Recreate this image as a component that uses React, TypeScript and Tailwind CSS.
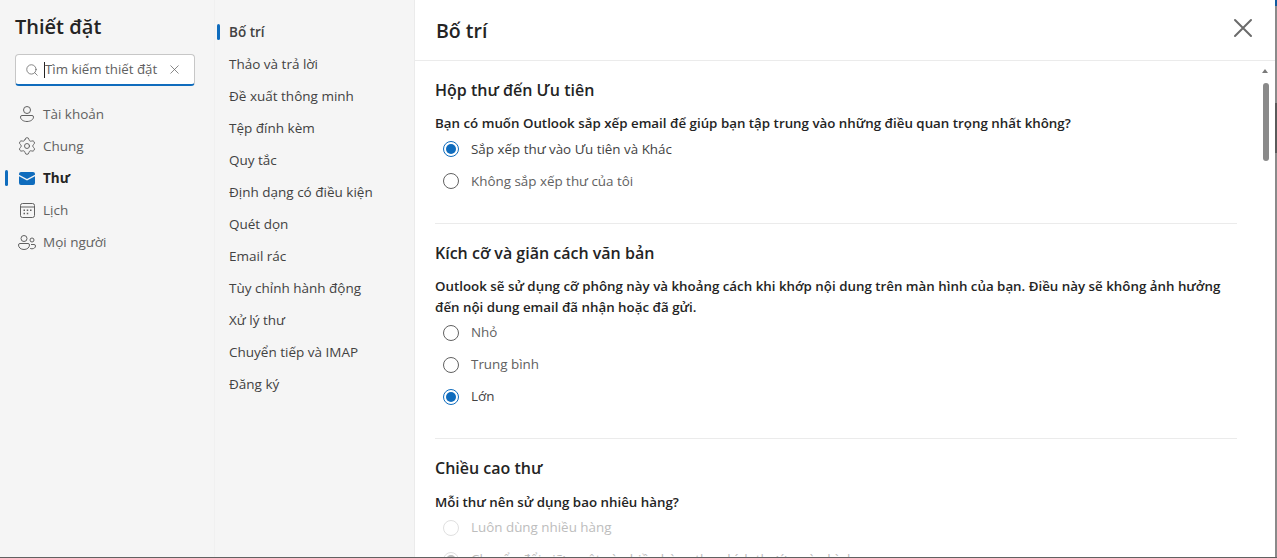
import { Search, X, Settings } from "lucide-react";

const subNav = [
  "Bố trí",
  "Thảo và trả lời",
  "Đề xuất thông minh",
  "Tệp đính kèm",
  "Quy tắc",
  "Định dạng có điều kiện",
  "Quét dọn",
  "Email rác",
  "Tùy chỉnh hành động",
  "Xử lý thư",
  "Chuyển tiếp và IMAP",
  "Đăng ký",
];

function MailIcon() {
  return (
    <svg width="16" height="13" viewBox="0 0 16 13">
      <path d="M0 2.800 8 7l8-4.200V2a2 2 0 0 0-2-2H2a2 2 0 0 0-2 2z" fill="#0f6cbd" />
      <path d="M0 4.200V11a2 2 0 0 0 2 2h12a2 2 0 0 0 2-2V4.200L8 8.400z" fill="#0f6cbd" />
    </svg>
  );
}

function PersonIcon() {
  return (
    <svg width="16" height="16" viewBox="0 0 16 16" fill="none" stroke="currentColor" strokeWidth="1">
      <circle cx="8" cy="4" r="3.500" />
      <path d="M3 9.500h10a1.500 1.500 0 0 1 1.500 1.500c0 2.500-2.800 4.500-6.500 4.500s-6.500-2-6.500-4.500A1.500 1.500 0 0 1 3 9.500z" />
    </svg>
  );
}

function CalendarIcon() {
  return (
    <svg width="15" height="15" viewBox="0 0 15 15" fill="none" stroke="currentColor" strokeWidth="1">
      <rect x="0.500" y="0.500" width="14" height="14" rx="2" />
      <path d="M1 4h13" />
      <g fill="currentColor" stroke="none">
        <rect x="3.500" y="6.500" width="1.500" height="1.500" />
        <rect x="6.750" y="6.500" width="1.500" height="1.500" />
        <rect x="10" y="6.500" width="1.500" height="1.500" />
        <rect x="3.500" y="9.750" width="1.500" height="1.500" />
        <rect x="6.750" y="9.750" width="1.500" height="1.500" />
      </g>
    </svg>
  );
}

function PeopleIcon() {
  return (
    <svg width="18" height="15" viewBox="0 0 18 15" fill="none" stroke="currentColor" strokeWidth="1">
      <circle cx="6" cy="3.500" r="3" />
      <circle cx="14" cy="5" r="2" />
      <path d="M2 8.500h8a1.500 1.500 0 0 1 1.500 1.500c0 2.500-2.300 4.500-5.500 4.500S0.500 12.500 0.500 10A1.500 1.500 0 0 1 2 8.500z" />
      <path d="M13 9.500h3a1.500 1.500 0 0 1 1.500 1.500c0 1.600-1.500 2.800-3.500 2.800-.7 0-1.300-.1-1.800-.4" />
    </svg>
  );
}

function Radio({ label, checked, disabled }: { label: string; checked?: boolean; disabled?: boolean }) {
  const ring = disabled ? "border-[#e0e0e0]" : checked ? "border-[#0f6cbd]" : "border-[#616161]";
  const text = disabled ? "text-[#bdbdbd]" : checked ? "text-[#424242]" : "text-[#616161]";
  return (
    <div className="flex h-8 items-center pl-2">
      <span className={`flex h-4 w-4 items-center justify-center rounded-full border ${ring}`}>
        {checked && <span className={`h-2.5 w-2.5 rounded-full ${disabled ? "bg-[#bdbdbd]" : "bg-[#0f6cbd]"}`} />}
      </span>
      <span className={`ml-3 text-[13.400px] ${text}`}>{label}</span>
    </div>
  );
}

function Section({ title, question, children, tight, last }: { title: string; question: string; children: React.ReactNode; tight?: boolean; last?: boolean }) {
  const spacing = last ? "pt-[17px]" : tight ? "border-b border-[#ebebeb] pb-[25px] pt-[17px]" : "border-b border-[#ebebeb] pb-[26px] pt-[17px]";
  return (
    <section className={spacing}>
      <h2 className="text-[16px] font-semibold leading-6 text-[#242424]">{title}</h2>
      <p className={`${last ? "mt-[12px]" : "mt-[11px]"} mb-[-0.500px] text-[13.330px] font-semibold leading-[20.500px] text-[#242424]`}>{question}</p>
      {children}
    </section>
  );
}

export default function App() {
  return (
    <div className="relative flex h-[558px] w-[1277px] overflow-hidden bg-white font-['Open_Sans','Noto_Sans',sans-serif] border-b border-[#616161]">
      <aside className="w-[215px] shrink-0 border-r border-[#f0f0f0] bg-[#f5f5f5] pl-[15px] pr-[19px]">
        <h1 className="mt-[13px] text-[20px] font-semibold leading-7 text-[#242424]">Thiết đặt</h1>
        <div className="mt-[13px] flex h-[32px] items-center rounded border border-[#c7c7c7] border-b-2 border-b-[#0f6cbd] bg-white pl-[9px] pr-[12px]">
          <Search size={14} strokeWidth={1.300} className="text-[#616161]" />
          <span className="ml-[5px] h-4 w-px bg-[#242424]" />
          <span className="flex-1 text-[13.300px] leading-none text-[#616161]">Tìm kiếm thiết đặt</span>
          <X size={15} strokeWidth={1.200} className="text-[#616161]" />
        </div>
        <nav className="mt-[12px] -ml-[10px]">
          <NavRow icon={<PersonIcon />} label="Tài khoản" />
          <NavRow icon={<Settings size={20} strokeWidth={1.150} />} label="Chung" />
          <NavRow icon={<MailIcon />} label="Thư" active />
          <NavRow icon={<CalendarIcon />} label="Lịch" />
          <NavRow icon={<PeopleIcon />} label="Mọi người" />
        </nav>
      </aside>

      <aside className="w-[200px] shrink-0 border-r border-[#ebebeb] bg-[#f5f5f5] pt-[16px]">
        {subNav.map((item, i) => (
          <div key={item} className="flex h-8 items-center">
            <span className={`h-4 w-[3px] rounded-sm ${i === 0 ? "ml-[2px] bg-[#0f6cbd]" : "ml-[2px]"}`} />
            <span className={`ml-[9px] text-[13.500px] text-[#424242] ${i === 0 ? "font-semibold" : ""}`}>{item}</span>
          </div>
        ))}
      </aside>

      <main className="relative flex-1 overflow-hidden">
        <header className="flex h-[61px] items-center justify-between border-b border-[#ebebeb] pl-[21px] pr-[22px]">
          <h1 className="mt-[2px] text-[19.500px] font-semibold text-[#242424]">Bố trí</h1>
          <svg width="20" height="20" viewBox="0 0 20 20" className="mt-[-4px] text-[#6b6b6b]" stroke="currentColor" strokeWidth="2" strokeLinecap="round">
            <path d="M2 2l16 16M18 2L2 18" />
          </svg>
        </header>
        <div className="pl-[20px] pr-[38px]">
          <Section title="Hộp thư đến Ưu tiên" question="Bạn có muốn Outlook sắp xếp email để giúp bạn tập trung vào những điều quan trọng nhất không?">
            <Radio label="Sắp xếp thư vào Ưu tiên và Khác" checked />
            <Radio label="Không sắp xếp thư của tôi" />
          </Section>
          <Section tight title="Kích cỡ và giãn cách văn bản" question="Outlook sẽ sử dụng cỡ phông này và khoảng cách khi khớp nội dung trên màn hình của bạn. Điều này sẽ không ảnh hưởng đến nội dung email đã nhận hoặc đã gửi.">
            <Radio label="Nhỏ" />
            <Radio label="Trung bình" />
            <Radio label="Lớn" checked />
          </Section>
          <Section last title="Chiều cao thư" question="Mỗi thư nên sử dụng bao nhiêu hàng?">
            <Radio label="Luôn dùng nhiều hàng" disabled />
            <Radio label="Chuyển đổi giữa một và nhiều hàng theo kích thước màn hình" checked disabled />
          </Section>
        </div>
        <div className="absolute right-[6px] top-[83px] h-[78px] w-[6px] rounded-full bg-[#8a8a8a]" />
        <div className="absolute right-[7px] top-[69px] h-0 w-0 border-x-[3px] border-b-[4px] border-x-transparent border-b-[#7a7a7a]" />
      </main>
      <div className="flex w-[2px] shrink-0 flex-col bg-[#8a8a8a]">
        <div className="h-[6px] bg-[#0f5a9e]" />
        <div className="mt-[97px] h-[50px] bg-[#5a5a5a]" />
      </div>
    </div>
  );
}

function NavRow({ icon, label, active }: { icon: React.ReactNode; label: string; active?: boolean }) {
  return (
    <div className="flex h-8 items-center">
      <span className={`h-4 w-[3px] rounded-sm ${active ? "bg-[#0f6cbd]" : ""}`} />
      <span className="ml-[9px] flex w-[20px] justify-center text-[#616161]">{icon}</span>
      <span className={`ml-[6px] text-[13.500px] ${active ? "font-bold text-[#242424]" : "text-[#616161]"}`}>{label}</span>
    </div>
  );
}
